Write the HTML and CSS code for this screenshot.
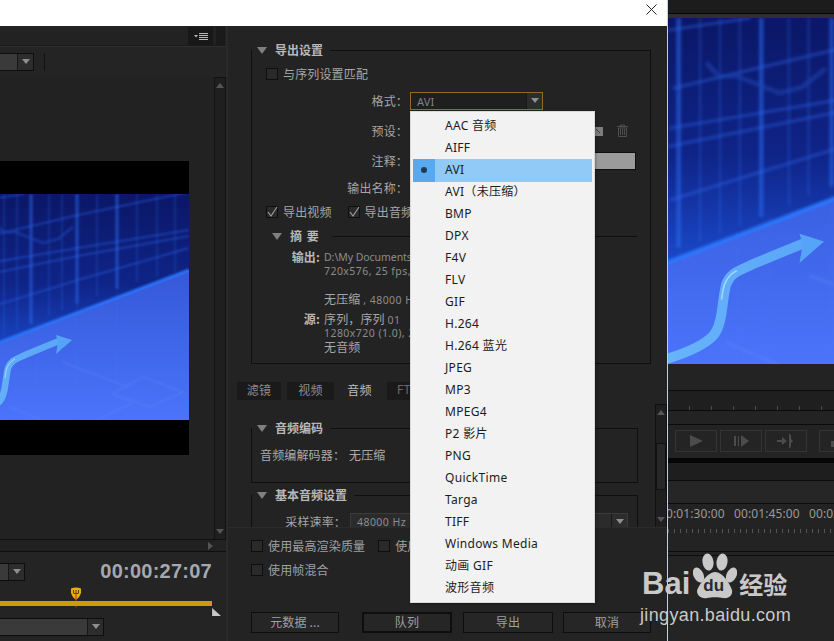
FILE: index.html
```html
<!DOCTYPE html>
<html lang="zh">
<head>
<meta charset="utf-8">
<title>导出设置</title>
<link rel="stylesheet" href="styles.css">
</head>
<body>
<div class="stage">
  <div class="dialog">
    <div class="titlebar">
      <svg class="close" viewBox="0 0 11 11"><path d="M.5.5l10 10M10.500.5l-10 10"/></svg>
    </div>
    <div class="dialog-body">
      <div class="preview-col">
        <div class="panel-head">
          <div class="menu-btn"><svg viewBox="0 0 14 8" width="14" height="8"><path class="ic" d="M0 2h4L2 4.500z"/><path class="ic-line" d="M5 .5h9M5 2.500h9M5 4.500h9M5 6.500h9"/></svg></div>
          <div class="menu-end"></div>
        </div>
        <div class="toolbar">
          <div class="combo combo-a"><span class="combo-arrow"></span></div>
          <div class="tool-div"></div>
        </div>
        <div class="monitor">
          <div class="viewer">
            <div class="frame">
              <svg class="art art-left" viewBox="0 0 402 226" preserveAspectRatio="none">
                <defs>
                  <linearGradient id="sky" x1="0" y1="0" x2="0" y2="1"><stop offset="0" stop-color="#0b1766"/><stop offset=".4" stop-color="#0f2488"/><stop offset=".7" stop-color="#1a48c8"/><stop offset="1" stop-color="#2058e0"/></linearGradient>
                  <linearGradient id="floor" x1="0" y1="0" x2="0" y2="1"><stop offset="0" stop-color="#3558d8"/><stop offset="1" stop-color="#4a74fa"/></linearGradient>
                  <linearGradient id="tube" x1="0" y1="0" x2="1" y2="0"><stop offset="0" stop-color="#6ab6fb"/><stop offset="1" stop-color="#5aa6f8"/></linearGradient>
                  <filter id="soft" x="-5%" y="-5%" width="110%" height="110%"><feGaussianBlur stdDeviation="1"/></filter>
                  <g id="artwork">
                    <rect width="402" height="226" fill="url(#sky)"/>
                    <g filter="url(#soft)" fill="none" stroke="#2c6af0">
                      <path stroke-width="3" opacity=".55" d="M190 0V150M244 0V130M290 0V110M330 0V95"/>
                      <path stroke-width="1.500" opacity=".28" d="M204 0V146M217 0V141M230 0V136M262 0V122M275 0V116M310 0V102M350 0V88M370 0V82M388 0V78"/>
                      <path stroke-width="2" opacity=".4" d="M183 8L237 0M186 46L291 21L402 -2M184 72L291 54L402 36M183 84L291 62L402 42M184 119L291 86L402 54"/>
                      <path stroke-width="3" opacity=".55" d="M208 29L216 38H228L256 49L271 45L286 33" stroke="#1c46b0"/>
                    </g>
                    <path d="M150 172L402 76V226H150z" fill="url(#floor)"/>
                    <path filter="url(#soft)" d="M150 172L402 76" fill="none" stroke-width="2.500" stroke="#2a78ff"/>
                    <g fill="none" stroke="#7ea0ff" stroke-width="1" opacity=".32" filter="url(#soft)">
                      <path d="M221 406L256 421M275 362L341 387M356 377L396 392L363 407L325 394zM345 403L310 420" transform="translate(0 -194)"/>
                      <path d="M228 140V226M250 130V226M290 110V226M330 96V226" stroke="#5a80f0" opacity=".5"/>
                    </g>
                    <path d="M170 226C190 221 205 215 212 208C219 201 218 186 221 174C224 166 230 165 238 161L272 147" fill="none" stroke="url(#tube)" stroke-width="6.500" stroke-linecap="round"/>
                    <path d="M218 184C218.500 180 219 177 220 174C221.500 170 224 167 228 165" fill="none" stroke="#c4e6ff" stroke-width="1" opacity=".7"/>
                    <path d="M285 146L269 141L271 148L269 160z" fill="#56a4f8"/>
                  </g>
                </defs>
                <use href="#artwork"/>
              </svg>
            </div>
          </div>
          <div class="vscroll">
            <span class="tri-up"></span>
            <span class="tri-down"></span>
          </div>
        </div>
        <div class="hscroll"><span class="tri-right"></span></div>
        <div class="transport">
          <div class="tc-row">
            <div class="combo combo-b"><span class="combo-arrow"></span></div>
            <div class="timecode">00:00:27:07</div>
          </div>
          <div class="range">
            <svg class="marker" viewBox="0 0 12 21"><path d="M1 1.500Q6 -.5 11 1.500V6Q10 10 6 13Q2 10 1 6z" fill="#e8ae10"/><path d="M3.500 3v3M6 3v3M8.500 3v3M3.500 6.500h5" stroke="#5a4204" fill="none"/><path d="M6 6v14.500" stroke="#c02a1a" fill="none"/></svg>
            <div class="range-bar"></div>
            <svg class="range-end" viewBox="0 0 11 9"><path d="M0 0L10 9H0z"/></svg>
          </div>
          <div class="combo combo-c"><span class="combo-arrow"></span></div>
        </div>
      </div>
      <div class="settings-col">
        <div class="panel panel-export">
          <div class="legend"><span class="tri"></span><b class="legend-title">导出设置</b><span class="legend-line"></span></div>
          <div class="check-row first-check"><span class="cb"></span><span class="cb-text">与序列设置匹配</span></div>
          <div class="form-row r30"><span class="form-label">格式：</span><div class="format-box"><span class="format-value">AVI</span><span class="combo-arrow"></span></div></div>
          <div class="form-row r30"><span class="form-label">预设：</span>
            <svg class="save-ic" viewBox="0 0 9 9"><rect width="9" height="9" fill="#7d7d7d"/><path d="M2 2l4 4" stroke="#3a3a3a"/></svg>
            <svg class="trash-ic" viewBox="0 0 13 13"><path d="M1 2.500h11M4.500 2.500V1h4v1.500M2.500 4h8v8.500h-8zM4.500 5v6M6.500 5v6M8.500 5v6" fill="none" stroke="#4f4f4f"/></svg>
          </div>
          <div class="form-row r30"><span class="form-label">注释：</span><div class="comment"></div></div>
          <div class="form-row r24"><span class="form-label">输出名称：</span></div>
          <div class="check-line r24">
            <div class="check-row"><span class="cb"><svg viewBox="0 0 12 12"><path d="M2 6l3 4 6-9" class="tick"/></svg></span><span class="cb-text">导出视频</span></div>
            <div class="check-row second"><span class="cb"><svg viewBox="0 0 12 12"><path d="M2 6l3 4 6-9" class="tick"/></svg></span><span class="cb-text">导出音频</span></div>
          </div>
          <div class="legend summary-legend"><span class="tri"></span><b class="legend-title wide">摘 要</b><span class="legend-line"></span></div>
          <div class="summary">
            <div class="sum-row"><b class="sum-label">输出:</b><span class="latin path">D:\My Documents\Adobe\Premiere\序列 01.avi</span></div>
            <div class="sum-row"><span class="sum-label"></span><span class="latin">720x576, 25 fps, 逐行</span></div>
            <div class="sum-row"><span class="sum-label"></span><span></span></div>
            <div class="sum-row"><span class="sum-label"></span><span>无压缩 <span class="latin">, 48000 Hz</span></span></div>
            <div class="sum-row gap"><b class="sum-label">源:</b><span>序列，序列 <span class="latin">01</span></span></div>
            <div class="sum-row"><span class="sum-label"></span><span class="latin">1280x720 (1.0), 25 fps</span></div>
            <div class="sum-row"><span class="sum-label"></span><span>无音频</span></div>
          </div>
        </div>
        <div class="tabs">
          <span class="tab t1">滤镜</span><span class="tab t2">视频</span><span class="tab active">音频</span><span class="tab t4 latin">FTP</span>
        </div>
        <div class="tab-page">
          <div class="page-content">
            <div class="panel panel-codec">
              <div class="legend"><span class="tri"></span><b class="legend-title">音频编码</b><span class="legend-line"></span></div>
              <div class="codec-row"><span class="codec-label">音频编解码器：</span><span>无压缩</span></div>
            </div>
            <div class="panel panel-basic">
              <div class="legend"><span class="tri"></span><b class="legend-title">基本音频设置</b><span class="legend-line"></span></div>
              <div class="rate-row"><span class="rate-label">采样速率：</span><div class="rate-box"><span class="latin rate-value">48000 Hz</span><span class="combo-arrow"></span></div></div>
            </div>
          </div>
          <div class="vscroll page-scroll">
            <span class="tri-up"></span>
            <span class="thumb"></span>
            <span class="tri-down"></span>
          </div>
        </div>
        <div class="footer">
          <div class="opt-row"><span class="cb"></span><span class="opt-text">使用最高渲染质量</span><span class="cb"></span><span class="opt-text">使用预览</span></div>
          <div class="opt-row"><span class="cb"></span><span class="opt-text">使用帧混合</span></div>
          <div class="buttons">
            <span class="btn btn-meta">元数据 ...</span>
            <span class="btn btn-primary">队列</span>
            <span class="btn btn-export">导出</span>
            <span class="btn btn-cancel">取消</span>
          </div>
        </div>
      </div>
    </div>
  </div>
  <div class="seam"></div>
  <div class="app">
    <div class="app-top"></div>
    <div class="app-mon"><svg class="art art-right" viewBox="0 0 402 226" preserveAspectRatio="none"><use href="#artwork"/></svg></div>
    <div class="app-gap"></div>
    <div class="ruler-top"></div>
    <div class="app-gap2"></div>
    <div class="controls">
      <span class="ctl"><svg viewBox="0 0 16 14" width="16" height="14"><path d="M2 1l13 6-13 6z" class="ctl-ic"/></svg></span>
      <span class="ctl"><svg viewBox="0 0 16 14" width="16" height="14"><path d="M1 2h2v10H1zM5 2h1v10H5zM8 1l8 6-8 6z" class="ctl-ic"/></svg></span>
      <span class="ctl"><svg viewBox="0 0 18 14" width="18" height="14"><path d="M0 6h5V3l5 4-5 4V8H0zM12 0q2 0 2 2v3l2 2-2 2v3q0 2-2 2" class="ctl-ic"/></svg></span>
      <span class="ctl ctl-last"><svg viewBox="0 0 18 14" width="18" height="14"><path d="M0 7h6V2h4v5h8v6H0z" class="ctl-ic"/></svg></span>
    </div>
    <div class="black-band"></div>
    <div class="app-strip"></div>
    <div class="app-strip2"></div>
    <div class="times"><span>00:01:30:00</span><span>00:01:45:00</span><span>00:02:00:00</span></div>
    <div class="ticks"></div>
    <div class="track-line"></div>
    <div class="tracks"></div>
  </div>

  <ul class="menu">
    <li>AAC 音频</li><li>AIFF</li><li class="sel">AVI</li><li>AVI（未压缩）</li><li>BMP</li><li>DPX</li><li>F4V</li><li>FLV</li><li>GIF</li><li>H.264</li><li>H.264 蓝光</li><li>JPEG</li><li>MP3</li><li>MPEG4</li><li>P2 影片</li><li>PNG</li><li>QuickTime</li><li>Targa</li><li>TIFF</li><li>Windows Media</li><li>动画 GIF</li><li>波形音频</li>
  </ul>

  <div class="watermark">
    <div class="wm-top">
      <span class="wm-bai">Bai</span>
      <span class="paw">
        <svg viewBox="0 0 44 46" width="44" height="46"><ellipse cx="15" cy="9" rx="5.500" ry="8.500" transform="rotate(-8 15 9)"/><ellipse cx="29" cy="9" rx="5.500" ry="8.500" transform="rotate(8 29 9)"/><ellipse cx="5.500" cy="22" rx="5" ry="8" transform="rotate(-25 5.500 22)"/><ellipse cx="38.500" cy="22" rx="5" ry="8" transform="rotate(25 38.500 22)"/><path d="M22 19C14 19 5 34 4 38C4 43 9 46 14 45C18 44 26 44 30 45C36 46 40 42 39 37C37 31 30 19 22 19z"/></svg>
        <span class="paw-du">du</span>
      </span>
      <span class="wm-cn">经验</span>
    </div>
    <div class="wm-url">jingyan.baidu.com</div>
  </div>
</div>
</body>
</html>
```

FILE: styles.css
```css
* { box-sizing: border-box; }
html, body { margin: 0; padding: 0; }
body { width: 834px; height: 641px; overflow: hidden; background: #232323; }
.stage {
  position: relative; display: flex; width: 834px; height: 641px; overflow: hidden;
  font: 12px "Noto Sans CJK SC", "Noto Sans", sans-serif; color: #a6a6a6; letter-spacing: .15px;
}
b { font-weight: 700; }

/* dialog */
.dialog { width: 667px; height: 641px; display: flex; flex-direction: column; background: #232323; flex: none; }
.titlebar { height: 26px; background: #fff; display: flex; justify-content: flex-end; align-items: flex-start; padding: 4px 10px 0 0; flex: none; }
.close { width: 11px; height: 11px; }
.close path { stroke: #222; fill: none; stroke-width: 1; }
.dialog-body { display: flex; flex: 1; min-height: 0; }
.seam { width: 1px; background: #c6cbe6; flex: none; }

/* left preview */
.preview-col { width: 228px; flex: none; display: flex; flex-direction: column; border-right: 2px solid #2a2a2a; }
.panel-head { height: 21px; flex: none; display: flex; justify-content: flex-end; align-items: flex-end; border-bottom: 1px solid #2f2f2f; background: #222; box-shadow: inset 0 -1px 0 #1a1a1a; padding-right: 1px; }
.menu-btn { width: 25px; height: 19px; background: #181818; display: flex; align-items: center; justify-content: center; margin-right: 3px; }
.menu-end { width: 9px; height: 19px; background: #1a1a1a; }
.ic { fill: #b8b8b8; }
.ic-line { stroke: #b8b8b8; fill: none; stroke-width: 1; }
.toolbar { height: 30px; flex: none; display: flex; align-items: center; background: #242424; }
.combo { height: 18px; display: flex; justify-content: flex-end; align-items: center; background: #3a3a3a; border: 1px solid #0e0e0e; border-left: 0; }
.combo-a { width: 34px; }
.combo-arrow { width: 16px; height: 100%; flex: none; border-left: 1px solid #171717; position: relative; background: #2d2d2d; }
.combo-arrow::after { content: ""; position: absolute; left: 4px; top: 5px; border: 4px solid transparent; border-top: 5px solid #8f8f8f; border-bottom: 0; }
.tool-div { width: 1px; height: 18px; background: #111; margin-left: 10px; }
.monitor { display: flex; height: 462px; flex: none; }
.viewer { width: 214px; flex: none; padding-top: 84px; background: #222; }
.frame { width: 189px; height: 294px; background: #000; padding-top: 33px; overflow: hidden; }
.art { display: block; flex: none; }
.art-left { width: 402px; height: 226px; margin-left: -213px; }
.vscroll { width: 12px; flex: none; border-left: 1px solid #111; border-right: 1px solid #111; background: #1f1f1f; display: flex; flex-direction: column; align-items: center; justify-content: space-between; padding: 5px 0; border-top: 1px solid #111; }
.tri-up { border: 4px solid transparent; border-bottom: 5px solid #555; border-top: 0; }
.tri-down { border: 4px solid transparent; border-top: 5px solid #555; border-bottom: 0; }
.tri-right { border: 4px solid transparent; border-left: 5px solid #555; border-right: 0; }
.hscroll { height: 13px; width: 226px; flex: none; border-top: 1px solid #0f0f0f; border-bottom: 1px solid #0f0f0f; display: flex; align-items: center; justify-content: flex-end; padding-right: 13px; background: #212121; box-shadow: inset -12px 0 0 #222; }
.transport { flex: 1; display: flex; flex-direction: column; background: #242424; }
.tc-row { height: 39px; display: flex; justify-content: space-between; align-items: center; padding-right: 14px; flex: none; }
.combo-b { width: 25px; }
.timecode { font: 700 20px "Liberation Sans", sans-serif; color: #a3a9ae; letter-spacing: .25px; }
.range { position: relative; height: 27px; flex: none; }
.marker { position: absolute; left: 70px; top: -4px; width: 12px; height: 21px; }
.range-bar { position: absolute; left: 0; top: 10px; width: 212px; height: 5px; background: #cf9a0e; }
.range-end { position: absolute; left: 212px; top: 17px; width: 10px; height: 8px; }
.range-end path { fill: #c9c9c9; }
.combo-c { width: 104px; margin-top: 0; }

/* right settings */
.settings-col { width: 439px; flex: none; display: flex; flex-direction: column; padding-top: 24px; background: #232323; }
.panel { border: 1px solid #0f0f0f; border-top: 0; }
.panel-export { width: 400px; height: 314px; margin-left: 23px; flex: none; }
.legend { height: 1px; display: flex; align-items: center; padding-left: 5px; overflow: visible; }
.legend .tri { flex: none; border: 5px solid transparent; border-top: 7px solid #808080; border-bottom: 0; }
.legend-title { margin: 0 0 2px 8px; font-size: 12px; color: #b8b8b8; white-space: nowrap; letter-spacing: 0; }
.legend-line { flex: 1; height: 1px; background: #0f0f0f; margin-left: 7px; }
.check-row { display: flex; align-items: center; gap: 5px; font-size: 12px; }
.cb-text { padding-bottom: 2px; }
.first-check { height: 16px; margin: 15px 0 4px 14px; }
.cb { width: 12px; height: 12px; border: 1px solid #0e0e0e; background: #2a2a2a; flex: none; display: block; }
.cb svg { display: block; width: 12px; height: 12px; margin: -1px; }
.tick { stroke: #9a9a9a; fill: none; stroke-width: 1.200; }
.form-row { display: flex; align-items: center; }
.r30 { height: 30px; }
.r24 { height: 24px; }
.form-label { width: 156px; text-align: right; flex: none; padding-bottom: 2px; }
.format-box { width: 133px; height: 18px; margin-left: 2px; border: 1px solid #8f6c1e; background: #1f1f1f; display: flex; justify-content: space-between; align-items: center; font: 11px "Noto Sans", sans-serif; color: #828282; }
.format-value { padding-left: 6px; }
.save-ic { width: 9px; height: 9px; margin-left: 186px; }
.trash-ic { width: 13px; height: 13px; margin: 0 0 1px 13px; }
.comment { width: 226px; height: 18px; margin-left: 2px; background: #9b9b9b; border: 1px solid #0f0f0f; }
.check-line { display: flex; align-items: center; padding-left: 14px; }
.second { margin-left: 16px; }
.summary-legend { margin: 12px 13px 0 20px; padding-left: 0; }
.summary-legend .legend-title { margin-left: 8px; letter-spacing: 1px; }
.summary-legend .legend-line { margin-left: 12px; }
.summary { margin-top: 13px; }
.sum-row { height: 14px; display: flex; align-items: center; line-height: 14px; white-space: nowrap; }
.sum-row.gap { margin-top: 6px; }
.sum-label { width: 68px; text-align: right; margin-right: 4px; flex: none; color: #b8b8b8; font-size: 12px; }
.latin { font-family: "Noto Sans", sans-serif; font-size: 10.500px; letter-spacing: .45px; color: #8c8c8c; }
.path { letter-spacing: -.05px; }

.tabs { height: 18px; margin: 18px 0 0 9px; display: flex; flex: none; }
.tab { height: 18px; display: flex; align-items: center; justify-content: center; font-size: 12px; color: #8d8d8d; background: #1a1a1a; padding-bottom: 3px; }
.t1 { width: 44px; margin-right: 6px; }
.t2 { width: 47px; margin-right: 2px; }
.active { width: 47px; background: #232323; color: #bdbdbd; margin-right: 4px; }
.t4 { width: 60px; justify-content: flex-start; padding-left: 10px; color: #6a6a6a; }
.tab-page { height: 127px; flex: none; display: flex; overflow: hidden; }
.page-content { width: 427px; padding: 28px 0 0 23px; flex: none; }
.panel-codec { width: 387px; height: 55px; }
.panel-basic { width: 387px; height: 60px; margin-top: 12px; }
.codec-row { display: flex; margin: 15px 0 0 8px; height: 20px; align-items: center; color: #aaa; }
.codec-label { width: 89px; }
.rate-row { display: flex; align-items: center; margin-top: 17px; height: 16px; }
.rate-label { width: 94px; margin-right: 4px; text-align: right; }
.rate-box { width: 278px; height: 18px; margin-top: 2px; border: 1px solid #3b3b3b; background: #2b2b2b; display: flex; justify-content: space-between; align-items: center; }
.rate-value { padding-left: 6px; }
.page-scroll { height: 123px; margin-top: 4px; border-top: 1px solid #111; position: relative; }
.thumb { width: 10px; height: 47px; border: 1px solid #111; background: #272727; }
.footer { flex: 1; border-top: 1px solid #2b2b2b; padding: 6px 0 0 23px; background: #232323; }
.opt-row { height: 24px; display: flex; align-items: center; color: #a0a0a0; }
.opt-text { margin: 0 13px 0 5px; padding-bottom: 2px; }
.buttons { display: flex; margin-top: 30px; }
.btn { height: 21px; display: flex; align-items: center; justify-content: center; border: 1px solid #0e0e0e; background: #262626; color: #a0a0a0; padding-bottom: 2px; }
.btn-meta { width: 88px; }
.btn-primary { width: 90px; margin-left: 23px; border-width: 2px; }
.btn-export { width: 90px; margin-left: 11px; }
.btn-cancel { width: 88px; margin-left: 10px; }

/* right app */
.app { flex: 1; min-width: 0; display: flex; flex-direction: column; background: #232323; overflow: hidden; }
.app-top { height: 18px; flex: none; background: #1c1c1c; border-bottom: 4px solid #2f2f2f; box-shadow: inset 0 -1px 0 #050505; }
.app-mon { height: 346px; flex: none; overflow: hidden; }
.art-right { width: 615px; height: 346px; margin-left: -280px; }
.app-gap { height: 26px; flex: none; }
.ruler-top { height: 21px; flex: none; border-top: 1px solid #0c0c0c; border-bottom: 1px solid #0c0c0c; background-color: #1f1f1f; background-image: repeating-linear-gradient(90deg, transparent 0 21px, #4a4a4a 21px 22px); background-size: 100% 5px; background-position: 0 15px; background-repeat: no-repeat; }
.app-gap2 { height: 14px; flex: none; border-bottom: 1px solid #0c0c0c; }
.controls { height: 33px; flex: none; display: flex; align-items: flex-start; padding: 5px 0 0 7px; gap: 3px; }
.ctl { width: 42px; height: 22px; border: 1px solid #343434; display: flex; align-items: center; justify-content: center; flex: none; background: #242424; }
.ctl-last { margin-left: 9px; }
.ctl-ic { fill: #4c4c4c; }
.black-band { height: 5px; flex: none; background: #050505; }
.app-strip { height: 18px; flex: none; background: #1e1e1e; border-bottom: 1px solid #0c0c0c; }
.app-strip2 { height: 23px; flex: none; background: #262626; border-bottom: 1px solid #0c0c0c; }
.times { height: 19px; flex: none; display: flex; gap: 15px; margin-left: -9px; align-items: center; font: 12px "Noto Sans", sans-serif; color: #9a9a9a; white-space: nowrap; letter-spacing: .1px; }
.times span { width: 60px; flex: none; }
.ticks { height: 10px; flex: none; background: repeating-linear-gradient(90deg, #555 0 1px, transparent 1px 6px) 0 6px / 100% 4px no-repeat; }
.track-line { height: 19px; flex: none; border-bottom: 1px solid #0c0c0c; }
.tracks { flex: 1; border-top: 1px solid #0c0c0c; margin-top: 3px; background: #242424; }

/* format dropdown */
.menu {
  position: absolute; left: 411px; top: 112px; width: 183px; height: 490px; margin: 0; padding: 3px 2px 2px; list-style: none;
  background: #f2f2f2; box-shadow: 0 0 0 1px #d9d9d9, 1px 1px 3px rgba(0,0,0,.5);
  font: 12px "Noto Sans", "Noto Sans CJK SC", sans-serif; color: #1c1c1c; letter-spacing: .3px;
}
.menu li { height: 22px; line-height: 22px; padding-left: 32px; position: relative; white-space: nowrap; }
.menu .sel { background: #91c9f7; height: 23px; margin-bottom: -1px; }
.menu .sel::before { content: ""; position: absolute; left: 0; top: 0; width: 22px; height: 23px; background: #58a9f0; }
.menu .sel::after { content: ""; position: absolute; left: 8px; top: 8px; width: 6px; height: 6px; border-radius: 50%; background: #1f3a55; }

/* watermark */
.watermark { position: absolute; left: 640px; top: 553px; width: 150px; color: #c9c9c9; letter-spacing: 0; }
.wm-top { display: flex; align-items: flex-end; height: 46px; }
.wm-bai { font: 700 31px/30px "Liberation Sans", sans-serif; margin: 0 3px 0 2px; }
.paw { position: relative; width: 44px; height: 46px; flex: none; }
.paw svg { display: block; fill: #c9c9c9; }
.paw-du { position: absolute; left: 10px; top: 24px; font: 700 17px/18px "Liberation Sans", sans-serif; color: #2a2a2a; }
.wm-cn { font: 700 24px/30px "Noto Sans CJK SC", sans-serif; margin-left: 2px; white-space: nowrap; }
.wm-url { font: 18px/20px "Liberation Sans", sans-serif; margin-top: 6px; white-space: nowrap; letter-spacing: .35px; }
```
